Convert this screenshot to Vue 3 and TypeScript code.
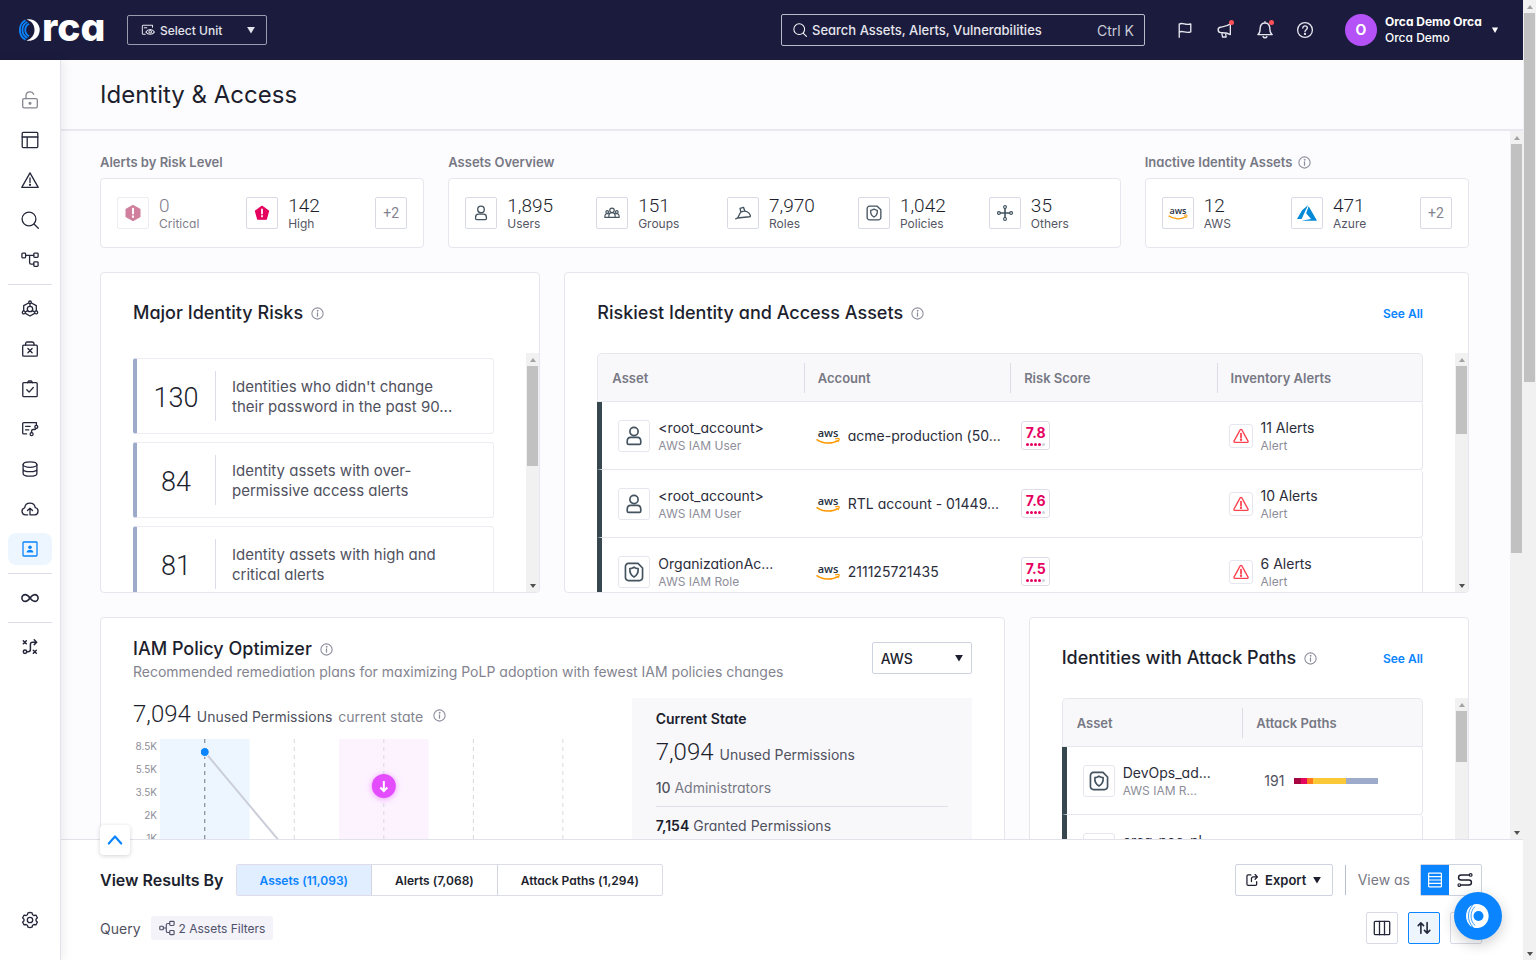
<script setup lang="ts">
import { h, ref, type FunctionalComponent } from 'vue'

const glyphs: Record<string, string> = {
  lock: '<rect x="1.7" y="7.6" width="14.6" height="9.2" rx="1.4"/><path d="M5 7.6V4.8a4 4 0 0 1 7.7-1.5"/><circle cx="9" cy="12.2" r=".9" fill="currentColor"/>',
  layout: '<rect x="1.2" y="1.4" width="15.6" height="15.2" rx="1"/><path d="M1.2 6h15.6M6.2 6v10.6"/>',
  warning: '<path d="M9 1.9 17.2 16.4H.8Z"/><path d="M9 7v4.6"/><circle cx="9" cy="13.8" r=".5" fill="currentColor"/>',
  search: '<circle cx="8" cy="8" r="6.9"/><path d="m13 13 4.3 4.2"/>',
  tree: '<rect x=".9" y="2.2" width="3.7" height="4.6" rx=".8"/><rect x="12.8" y="2.2" width="4.3" height="4.2" rx=".8"/><rect x="12.8" y="10.8" width="4.3" height="4.6" rx=".8"/><path d="M4.6 4.3h8.2M8.6 4.3v7.4a1.4 1.4 0 0 0 1.4 1.4h2.8"/>',
  cluster: '<path d="M9 2.2 15.3 5.6v6.8L9 16 2.7 12.4V5.6Z"/><circle cx="9" cy="9" r="2.7"/><path d="M9 3v3.3M6.7 10.6 3.5 12.5M11.3 10.6l3.2 1.9"/><circle cx="9" cy="2.3" r="1.3" fill="#fff"/><circle cx="2.8" cy="12.4" r="1.5" fill="#fff"/><circle cx="15.2" cy="12.4" r="1.5" fill="#fff"/>',
  caseX: '<rect x="1.7" y="5.2" width="14.6" height="11" rx="1"/><path d="M4.7 5.2V3.3A1.3 1.3 0 0 1 6 2h5a2 2 0 0 1 2 2v1.2M6.9 8.5l4.2 4.2M11.1 8.500l-4.200 4.200"/>',
  clipboard: '<rect x="1.8" y="2.7" width="14.4" height="14" rx="1"/><path d="M6.5 2.7 7.500 1h3l1 1.700M5.800 9.800l2.300 2.300 4.200-4.600"/>',
  route: '<path d="M5.6 13.900H2.700a1 1 0 0 1-1-1V3.600a1 1 0 0 1 1-1h12.700v2.800M4.600 6.300h4.600M4.600 9.800h3.200M10.600 12.500V11a1.500 1.500 0 0 1 1.500-1.500h1.400a1.500 1.500 0 0 0 1.500-1.300"/><circle cx="15.300" cy="6.900" r="1.500"/><circle cx="10.600" cy="14.200" r="1.500"/>',
  database: '<ellipse cx="9" cy="4.600" rx="6.900" ry="2.700"/><path d="M2.100 4.600v8.900c0 1.500 3.100 2.700 6.900 2.700s6.900-1.200 6.900-2.700V4.600M2.100 9c0 1.500 3.100 2.700 6.900 2.700s6.900-1.200 6.900-2.700"/>',
  cloud: '<path d="M6.700 14.800H4.400a3.500 3.500 0 0 1-.7-6.900 5.300 5.300 0 0 1 10.500-.2 3.600 3.600 0 0 1-.3 7.100H9V8.300M6.500 10.500 9 8.100l2.500 2.400"/>',
  badge: '<rect x="2" y="2" width="14" height="14" rx=".8"/><circle cx="9" cy="7.200" r="1.800" fill="currentColor" stroke="none"/><path d="M5.600 12.600c0-3.700 6.800-3.700 6.800 0Z" fill="currentColor" stroke="none"/>',
  infinity: '<path d="M9 9C7.200 6.500 6 5.600 4.300 5.600a3.400 3.400 0 0 0 0 6.800C6 12.400 7.200 11.500 9 9s3-3.400 4.700-3.400a3.400 3.400 0 0 1 0 6.800C12 12.400 10.800 11.500 9 9Z" stroke-width="1.600"/>',
  shuffle: '<g stroke-width="1.500"><path d="m2.300 2.700 3 3M5.300 2.700l-3 3M12.300 12.200l3 3M15.300 12.200l-3 3M6.200 13.700h1a2.200 2.200 0 0 0 2.200-2.200V6.400a2.200 2.200 0 0 1 2.200-2.200h3.800M13.200 1.800l2.500 2.400-2.500 2.400"/><circle cx="4" cy="13.700" r="1.700"/></g>',
  gear: '<path d="m9 1.300 2 .5.6 1.900 1.300.8 2-.4 1.500 2.600-1.400 1.500v1.600l1.400 1.500-1.500 2.600-2-.4-1.300.8-.6 1.900-2 .5-2-.5-.6-1.900-1.300-.8-2 .4-1.500-2.600L3 9.800V8.200L1.600 6.700l1.500-2.600 2 .4 1.300-.8L7 1.800Z"/><circle cx="9" cy="9" r="2.700"/>',
  unit: '<path d="M5.500 14.400H2.700a1 1 0 0 1-1-1V4a1 1 0 0 1 1-1h12.100v2.500M4.200 6.200h3.200M6.300 11.700c2.500-4.400 8.400-4.400 10.900 0-2.500 3.800-8.400 3.800-10.900 0Z"/><circle cx="11.800" cy="11.300" r="1.700"/>',
  flag: '<path d="M2.500 17.200V2.300c4.200-2.300 7 2 13-.2v9c-6 2.200-8.800-2-13 .2" stroke-width="1.500"/>',
  megaphone: '<path d="M15 1.900v12.300c-4-2.500-8-1.900-10.800-2.200-3.700-.6-3.900-5.100-.6-6.100C8.400 5 11.500 5 15 1.900ZM5.300 12.200l1 4.700h4l-.7-4.500" stroke-width="1.500"/>',
  bell: '<path d="M1.900 13.600c2.400-1.500 2-3.500 2.300-6.700C4.500 3.700 6.300 2 9 2s4.500 1.700 4.800 4.900c.3 3.200-.1 5.200 2.300 6.700ZM7.100 15.600c.7 1.500 3.100 1.500 3.800 0M9 2V.8" stroke-width="1.400"/>',
  help: '<circle cx="9" cy="9" r="7.400" stroke-width="1.300"/><path d="M6.800 7.100c0-3 4.500-2.800 4.500-.1 0 1.700-2.300 1.700-2.300 3.500" stroke-width="1.400"/><circle cx="9" cy="12.900" r=".5" fill="currentColor"/>',
  user: '<g stroke-width="1.500"><circle cx="9" cy="5" r="3.700"/><path d="M2.900 13.900c0-2.100 1.100-3.600 3.100-3.600h6c2 0 3.100 1.500 3.100 3.600v1.300a1.300 1.300 0 0 1-1.300 1.300H4.200a1.300 1.300 0 0 1-1.300-1.300Z"/></g>',
  group: '<circle cx="9" cy="6" r="2.500"/><path d="M5.500 14v-2.200c0-4.200 7-4.200 7 0V14ZM5.500 14H1v-1.700c0-2.300 2-3 4.200-2.400M12.500 14H17v-1.700c0-2.300-2-3-4.200-2.400"/><circle cx="3.600" cy="7.900" r="1.500"/><circle cx="14.400" cy="7.900" r="1.500"/>',
  role: '<path d="M.8 15.500 2.700 14.600c1.700-.9 1.500-4.900 4.300-6.700 4.500-2.600 9.600.4 10.300 4.100.1.800-.3 1.100-1 1.200L2.700 14.600M6.500 7.900 5.700 3.800l3.800-1.200 1.600 4.200" stroke-width="1.500"/>',
  policy: '<g stroke-width="1.500"><path d="M4 1.300h8.600l4.100 4.100V14a2.700 2.700 0 0 1-2.700 2.700H4A2.700 2.700 0 0 1 1.300 14V4A2.700 2.700 0 0 1 4 1.300Z"/><path d="M9 4.600c1.200.9 2.400 1.300 3.700 1.400.3 3.400-.6 5.900-3.700 7.500-3.100-1.600-4-4.100-3.700-7.500C6.600 5.900 7.800 5.500 9 4.600Z"/></g>',
  nodes: '<circle cx="9" cy="2.300" r="1.600"/><circle cx="9" cy="15.700" r="1.600"/><circle cx="2.200" cy="9" r="1.600"/><circle cx="15.800" cy="9" r="1.600"/><path d="M9 3.900v10.200M3.800 9h10.400" stroke-width="1.800"/>',
  info: '<circle cx="9" cy="9" r="7.800" stroke-width="1.500"/><path d="M9 8v4.800" stroke-width="1.700"/><circle cx="9" cy="5.300" r=".6" fill="currentColor"/>',
  critical: '<path d="M9 .8 16.500 4.900v8.200L9 17.200 1.500 13.100V4.900Z" fill="currentColor" stroke="none"/><path d="M9 4.800v4.700M9 12.300v.6" stroke="#fff" stroke-width="2"/>',
  high: '<path d="M9 1.500 16.300 6.800 13.800 15.900H4.200L1.700 6.800Z" fill="currentColor" stroke="currentColor" stroke-width="1.500"/><path d="M9 5v4.600M9 12.200v.6" stroke="#fff" stroke-width="2"/>',
  alert: '<path d="M8.200 1.900a1 1 0 0 1 1.600 0l7.100 12.800a1 1 0 0 1-.9 1.500H2a1 1 0 0 1-.9-1.500Z" stroke-width="1.500"/><path d="M9 6.300v4.500" stroke-width="2"/><circle cx="9" cy="13.200" r=".7" fill="currentColor"/>',
  azure: '<path d="M5.483 21.300H24L14.025 4.013l-3.038 8.347 5.836 6.938ZM13.230 2.700 6.105 8.677 0 19.253h5.505Z" transform="scale(.75)" fill="#0089d6" stroke="none"/>',
  share: '<path d="M7.500 2.500H4A1.500 1.500 0 0 0 2.500 4v10.500A1.500 1.500 0 0 0 4 16h9.500a1.500 1.500 0 0 0 1.500-1.500V11M8.300 11V7.500a2.500 2.500 0 0 1 2.500-2.500h5M13 2l3 3-3 3" stroke-width="1.600"/>',
  rows: '<rect x="1.800" y="1.300" width="14.400" height="15.400" rx=".8"/><path d="M1.800 5.200h14.400M1.800 9h14.400M1.800 12.800h14.400"/>',
  path: '<circle cx="15.400" cy="3.300" r="1.500"/><circle cx="2.600" cy="14.700" r="1.500"/><path d="M13.900 3.300H4.600a2.850 2.850 0 0 0 0 5.700h8.800a2.850 2.850 0 0 1 0 5.700H4.100" stroke-width="1.600"/>',
  columns: '<rect x="1.300" y="2.300" width="15.400" height="13.400" rx="1"/><path d="M6.500 2.300v13.400M11.500 2.300v13.400"/>',
  sort: '<path d="M5.500 15V3.500M2.500 6.300l3-3 3 3M12.500 3v11.500M9.500 11.700l3 3 3-3" stroke-width="1.800"/>',
  filter: '<path d="M2 3h14l-5.500 6.500V16L7.500 14V9.500Z"/>',
  query: '<rect x=".9" y="7" width="4" height="4" rx=".8"/><rect x="12" y="1.600" width="5" height="4.600" rx="1"/><rect x="12" y="11.800" width="5" height="4.600" rx="1"/><path d="M4.900 9h3.300M12 3.900h-2a1.800 1.800 0 0 0-1.800 1.800v6.600a1.800 1.800 0 0 0 1.800 1.800h2"/>',
  chevronUp: '<path d="m2 13 7-8 7 8" stroke-width="2.400"/>',
  caret: '<path d="M2 3.500h14L9 15.500Z" fill="currentColor" stroke="none"/>',
}

const Icon: FunctionalComponent<{ name: string }> = (props) =>
  h('svg', {
    class: 'icon',
    viewBox: '0 0 18 18',
    fill: 'none',
    stroke: 'currentColor',
    'stroke-width': '1.3',
    'stroke-linejoin': 'round',
    'stroke-linecap': 'round',
    'aria-hidden': 'true',
    innerHTML: glyphs[props.name],
  })
Icon.props = ['name']

const AwsMark: FunctionalComponent = () =>
  h('svg', {
    class: 'aws-mark',
    viewBox: '0 0 24 22',
    'aria-label': 'AWS',
    innerHTML:
      '<text x="12" y="12" text-anchor="middle" font-family="Open Sans, sans-serif" font-weight="600" font-size="11" fill="#252f3e">aws</text>' +
      '<path d="M.5 14.400c6 4.600 16 4.800 21.500 1" fill="none" stroke="#f90" stroke-width="1.500"/><path d="M19.200 13.800c2-.5 3.500-.5 3.800-.1s-.1 2-1.200 3.300" fill="none" stroke="#f90" stroke-width="1.200"/>',
  })

const ScrollBar: FunctionalComponent<{ size: string }> = (props) =>
  h('div', { class: 'sbar', 'aria-hidden': 'true' }, [
    h('i', { class: 'sbar-up' }),
    h('div', { class: 'sbar-track' }, [h('div', { class: 'sbar-thumb', style: { height: props.size } })]),
    h('i', { class: 'sbar-down' }),
  ])
ScrollBar.props = ['size']

const navGroups: string[][] = [
  ['lock', 'layout', 'warning', 'search', 'tree'],
  ['cluster', 'caseX', 'clipboard', 'route', 'database', 'cloud', 'badge'],
  ['infinity'],
  ['shuffle'],
]
const activeNav = ref('badge')

const overview = [
  { icon: 'user', value: '1,895', label: 'Users' },
  { icon: 'group', value: '151', label: 'Groups' },
  { icon: 'role', value: '7,970', label: 'Roles' },
  { icon: 'policy', value: '1,042', label: 'Policies' },
  { icon: 'nodes', value: '35', label: 'Others' },
]

const risks = [
  { count: 130, lines: ["Identities who didn't change", 'their password in the past 90...'] },
  { count: 84, lines: ['Identity assets with over-', 'permissive access alerts'] },
  { count: 81, lines: ['Identity assets with high and', 'critical alerts'] },
]

const riskiest = [
  { icon: 'user', name: '<root_account>', type: 'AWS IAM User', account: 'acme-production (50...', score: '7.8', alerts: 11 },
  { icon: 'user', name: '<root_account>', type: 'AWS IAM User', account: 'RTL account - 01449...', score: '7.6', alerts: 10 },
  { icon: 'policy', name: 'OrganizationAc...', type: 'AWS IAM Role', account: '211125721435', score: '7.5', alerts: 6 },
]

const attackRows = [
  { name: 'DevOps_ad...', type: 'AWS IAM R...', count: 191 },
  { name: 'orca-poc-pl...', type: 'AWS IAM R...', count: 164 },
]
const severity = [
  { color: '#a5063f', share: 7 },
  { color: '#e5065f', share: 6 },
  { color: '#ff7a1f', share: 6 },
  { color: '#fbc937', share: 33 },
  { color: '#9daaca', share: 32 },
]

const axis = ['8.5K', '5.5K', '3.5K', '2K', '1K']
const tabs = ['Assets (11,093)', 'Alerts (7,068)', 'Attack Paths (1,294)']
const activeTab = ref(0)
</script>

<template>
  <div class="page">
    <div class="shell">
      <header class="topbar">
        <a class="logo" href="#" aria-label="orca">
          <svg class="logo-ring" viewBox="0 0 22 22" fill="none">
            <path d="M7.500.600A10.700 10.700 0 1 1 7.500 21.400C12.500 20 15.500 16 15.500 11S12.500 2 7.500.600Z" fill="#fff" />
            <g stroke="#0a84ff" stroke-width="1.800">
              <path d="M6.500 1.300C-1 5.500-1 16.500 6.500 20.700" />
              <path d="M8.300 3C1.800 6.500 1.800 15.500 8.300 19" />
              <path d="M10 4.700C5 7.500 5 14.500 10 17.300" />
            </g>
          </svg>
          <span class="logo-text">rca</span>
        </a>
        <label class="unit">
          <Icon name="unit" class="s14" />
          <select aria-label="Unit"><option>Select Unit</option></select>
          <Icon name="caret" class="s10" />
        </label>
        <label class="search">
          <Icon name="search" class="s14" />
          <input type="text" placeholder="Search Assets, Alerts, Vulnerabilities" aria-label="Search" />
          <span class="hint">Ctrl K</span>
        </label>
        <div class="actions">
          <button aria-label="Flag"><Icon name="flag" class="s16" /></button>
          <button aria-label="News"><Icon name="megaphone" class="s16" /><i class="dot"></i></button>
          <button aria-label="Notifications"><Icon name="bell" class="s18" /><i class="dot"></i></button>
          <button aria-label="Help"><Icon name="help" class="s18" /></button>
        </div>
        <button class="profile">
          <span class="avatar">O</span>
          <span class="who"><b>Orca Demo Orca</b><span>Orca Demo</span></span>
          <Icon name="caret" class="s8" />
        </button>
      </header>

      <div class="body">
        <nav class="side" aria-label="Main">
          <template v-for="(group, g) in navGroups" :key="g">
            <hr v-if="g > 0" />
            <a
              v-for="n in group"
              :key="n"
              href="#"
              :aria-label="n"
              :class="{ active: n === activeNav, muted: n === 'lock' }"
              @click.prevent="activeNav = n"
            ><Icon :name="n" class="s18" /></a>
          </template>
          <a href="#" class="settings" aria-label="Settings"><Icon name="gear" class="s18" /></a>
        </nav>

        <main class="main">
          <div class="title"><h1>Identity &amp; Access</h1></div>

          <div class="viewport">
            <div class="dash">
              <section class="block w3">
                <h2 class="label">Alerts by Risk Level</h2>
                <div class="card stats short">
                  <div class="stat faded">
                    <span class="box critical"><Icon name="critical" class="s18" /></span>
                    <div><b>0</b><span>Critical</span></div>
                  </div>
                  <div class="stat">
                    <span class="box high"><Icon name="high" class="s16" /></span>
                    <div><b>142</b><span>High</span></div>
                  </div>
                  <button class="box more">+2</button>
                </div>
              </section>

              <section class="block w6">
                <h2 class="label">Assets Overview</h2>
                <div class="card stats long">
                  <div v-for="o in overview" :key="o.label" class="stat">
                    <span class="box"><Icon :name="o.icon" class="s16" /></span>
                    <div><b>{{ o.value }}</b><span>{{ o.label }}</span></div>
                  </div>
                </div>
              </section>

              <section class="block w3">
                <h2 class="label">Inactive Identity Assets <Icon name="info" class="s12" /></h2>
                <div class="card stats short">
                  <div class="stat">
                    <span class="box"><AwsMark class="small" /></span>
                    <div><b>12</b><span>AWS</span></div>
                  </div>
                  <div class="stat">
                    <span class="box"><Icon name="azure" class="s20" /></span>
                    <div><b>471</b><span>Azure</span></div>
                  </div>
                  <button class="box more">+2</button>
                </div>
              </section>

              <section class="card panel w4">
                <div class="panel-head"><h2>Major Identity Risks <Icon name="info" class="s12" /></h2></div>
                <div class="panel-body">
                  <ul class="risks">
                    <li v-for="r in risks" :key="r.count">
                      <span class="count">{{ r.count }}</span>
                      <p>{{ r.lines[0] }}<br />{{ r.lines[1] }}</p>
                    </li>
                  </ul>
                  <ScrollBar size="47%" />
                </div>
              </section>

              <section class="card panel w8">
                <div class="panel-head">
                  <h2>Riskiest Identity and Access Assets <Icon name="info" class="s12" /></h2>
                  <a href="#">See All</a>
                </div>
                <div class="panel-body">
                  <table class="grid">
                    <thead>
                      <tr><th>Asset</th><th>Account</th><th>Risk Score</th><th>Inventory Alerts</th></tr>
                    </thead>
                    <tbody>
                      <tr v-for="(r, i) in riskiest" :key="i">
                        <td>
                          <div class="cell asset">
                            <span class="box"><Icon :name="r.icon" class="s20" /></span>
                            <div class="pair"><span>{{ r.name }}</span><small>{{ r.type }}</small></div>
                          </div>
                        </td>
                        <td><div class="cell account"><AwsMark />{{ r.account }}</div></td>
                        <td>
                          <div class="cell risk">
                            <span class="score">{{ r.score }}<span class="dots"><i v-for="d in 5" :key="d"></i></span></span>
                          </div>
                        </td>
                        <td>
                          <div class="cell alerts">
                            <span class="box red"><Icon name="alert" class="s16" /></span>
                            <div class="pair"><span>{{ r.alerts }} Alerts</span><small>Alert</small></div>
                          </div>
                        </td>
                      </tr>
                    </tbody>
                  </table>
                  <ScrollBar size="32%" />
                </div>
              </section>

              <section class="card panel w8 optimizer">
                <div class="opt-head">
                  <div>
                    <h2>IAM Policy Optimizer <Icon name="info" class="s12" /></h2>
                    <p>Recommended remediation plans for maximizing PoLP adoption with fewest IAM policies changes</p>
                  </div>
                  <label class="provider">
                    <select aria-label="Provider"><option>AWS</option></select>
                    <Icon name="caret" class="s10" />
                  </label>
                </div>
                <div class="opt-body">
                  <div>
                    <div class="headline">
                      <b>7,094</b><span>Unused Permissions</span><em>current state</em><Icon name="info" class="s12" />
                    </div>
                    <div class="chart">
                      <div class="axis"><span v-for="a in axis" :key="a">{{ a }}</span></div>
                      <svg class="plot">
                        <rect x="0" y="0" width="20%" height="100%" fill="#edf5ff" />
                        <rect x="40%" y="0" width="20%" height="100%" fill="#fdf3ff" />
                        <g stroke="#d9d9df" stroke-dasharray="4 4">
                          <line x1="30%" x2="30%" y1="0" y2="100%" />
                          <line x1="50%" x2="50%" y1="0" y2="100%" />
                          <line x1="70%" x2="70%" y1="0" y2="100%" />
                          <line x1="90%" x2="90%" y1="0" y2="100%" />
                        </g>
                        <line x1="10%" x2="10%" y1="0" y2="100%" stroke="#6d7682" stroke-dasharray="4 4" />
                        <line x1="10%" y1="13" x2="30%" y2="120" stroke="#cbced9" stroke-width="2" />
                        <circle cx="10%" cy="13" r="4.500" fill="#0a84ff" stroke="#fff" />
                        <svg x="50%" y="47" overflow="visible">
                          <circle class="glow" r="12" fill="#e44dff" />
                          <path d="M0-5V5M-3.500 1.500 0 5l3.500-3.500" fill="none" stroke="#fff" stroke-width="2" />
                        </svg>
                      </svg>
                    </div>
                  </div>
                  <aside class="state">
                    <h3>Current State</h3>
                    <div class="headline"><b>7,094</b><span>Unused Permissions</span></div>
                    <p class="admins"><b>10</b> Administrators</p>
                    <p class="granted"><b>7,154</b> Granted Permissions</p>
                  </aside>
                </div>
              </section>

              <section class="card panel w4">
                <div class="panel-head">
                  <h2>Identities with Attack Paths <Icon name="info" class="s12" /></h2>
                  <a href="#">See All</a>
                </div>
                <div class="panel-body">
                  <table class="grid">
                    <thead><tr><th>Asset</th><th>Attack Paths</th></tr></thead>
                    <tbody>
                      <tr v-for="r in attackRows" :key="r.name">
                        <td>
                          <div class="cell asset">
                            <span class="box"><Icon name="policy" class="s20" /></span>
                            <div class="pair"><span>{{ r.name }}</span><small>{{ r.type }}</small></div>
                          </div>
                        </td>
                        <td>
                          <div class="cell paths">
                            {{ r.count }}
                            <span class="bar"><i v-for="s in severity" :key="s.color" :style="{ background: s.color, flexGrow: s.share }"></i></span>
                          </div>
                        </td>
                      </tr>
                    </tbody>
                  </table>
                  <ScrollBar size="24%" />
                </div>
              </section>
            </div>
            <ScrollBar size="60%" />
          </div>

          <section class="results">
            <button class="collapse" aria-label="Expand results"><Icon name="chevronUp" class="s16" /></button>
            <div class="row">
              <h2>View Results By</h2>
              <div class="tabs">
                <button v-for="(t, i) in tabs" :key="t" :class="{ on: i === activeTab }" @click="activeTab = i">{{ t }}</button>
              </div>
              <button class="export"><Icon name="share" class="s14" />Export<Icon name="caret" class="s10" /></button>
              <span class="viewas">View as</span>
              <div class="segment">
                <button class="on" aria-label="Table view"><Icon name="rows" class="s16" /></button>
                <button aria-label="Path view"><Icon name="path" class="s16" /></button>
              </div>
            </div>
            <div class="row second">
              <span class="query">Query</span>
              <button class="chip"><Icon name="query" class="s16" />2 Assets Filters</button>
              <div class="tools">
                <button class="box" aria-label="Columns"><Icon name="columns" class="s18" /></button>
                <button class="box sel" aria-label="Sort"><Icon name="sort" class="s16" /></button>
                <button class="box" aria-label="Filter"><Icon name="filter" class="s16" /></button>
              </div>
            </div>
            <button class="fab" aria-label="Orca assistant">
              <svg viewBox="0 0 28 28" fill="none">
                <path d="M10 2.300A12 12 0 1 1 10 25.700C.5 20 .5 8 10 2.300Z" fill="#fff" />
                <circle cx="14.500" cy="14" r="5" fill="#0a84ff" />
                <path d="M7.500 3.800c-6.500 5.500-6.500 15 0 20.400" stroke="#fff" stroke-width="1.200" />
                <g stroke="#0a84ff" stroke-width=".8">
                  <path d="M8.600 3.500c-5.500 5.500-5.500 15.500 0 21M11 4.500c-5.300 5-5.300 14 0 19" />
                </g>
              </svg>
            </button>
          </section>
        </main>
      </div>
    </div>
    <ScrollBar size="39.5%" />
  </div>
</template>

<style>
body {
  margin: 0;
}
.sbar {
  flex: none;
  width: 13px;
  display: flex;
  flex-direction: column;
  background: #f1f1f1;
}
.sbar-track {
  flex: 1;
  padding: 0 1px;
}
.sbar-thumb {
  background: #c1c1c1;
}
.sbar-up,
.sbar-down {
  flex: none;
  height: 13px;
  display: flex;
  align-items: center;
  justify-content: center;
}
.sbar-up::before,
.sbar-down::before {
  content: '';
  border: 3px solid transparent;
  border-top-width: 0;
  border-bottom: 4px solid #a3a3a3;
}
.sbar-down::before {
  border-bottom: 0;
  border-top: 4px solid #505050;
}
</style>

<style scoped>
.page {
  display: flex;
  height: 100vh;
  overflow: hidden;
  font-family: Inter, 'Open Sans', sans-serif;
  font-feature-settings: 'cv11', 'calt' 0;
  font-size: 14px;
  color: #1d1f2e;
  background: #fcfcfe;
}
button,
input,
select {
  font: inherit;
  font-feature-settings: inherit;
  color: inherit;
  background: none;
  border: 0;
  padding: 0;
  margin: 0;
  outline: none;
  appearance: none;
}
button {
  cursor: pointer;
}
a {
  text-decoration: none;
  color: #0a84ff;
}
h1,
h2,
h3,
p,
ul {
  margin: 0;
  padding: 0;
  list-style: none;
}
h2 {
  font-size: 18px;
  font-weight: 500;
  line-height: 24px;
}
.icon {
  flex: none;
  display: block;
}
.s8 { width: 8px; height: 8px; }
.s10 { width: 10px; height: 10px; }
.s12 { width: 13px; height: 13px; }
.s14 { width: 14px; height: 14px; }
.s16 { width: 16px; height: 16px; }
.s18 { width: 18px; height: 18px; }
.s20 { width: 20px; height: 20px; }
h2 .icon,
.headline .icon {
  color: #8d8e9c;
}

.shell {
  flex: 1;
  min-width: 0;
  display: flex;
  flex-direction: column;
}
.topbar {
  flex: none;
  height: 60px;
  display: flex;
  align-items: center;
  padding: 0 24px 0 19px;
  background: #1b1c3d;
  color: #fff;
}
.logo {
  display: flex;
  align-items: center;
  width: 108px;
  color: #fff;
}
.logo-ring {
  width: 22px;
  height: 22px;
}
.logo-text {
  margin: -6px 0 0 1px;
  font-size: 39px;
  line-height: 42px;
  font-weight: 800;
}
.unit {
  box-sizing: border-box;
  display: flex;
  align-items: center;
  gap: 5px;
  width: 140px;
  height: 30px;
  padding: 0 10px 0 13px;
  border: 1px solid #9a9bae;
  border-radius: 2px;
  color: #e4e4ec;
}
.unit select {
  flex: 1;
  min-width: 0;
  font-size: 12px;
  font-weight: 500;
}
.search {
  box-sizing: border-box;
  display: flex;
  align-items: center;
  gap: 5px;
  width: 364px;
  height: 32px;
  margin-left: auto;
  padding: 0 10px 0 11px;
  border: 1px solid #b9bac8;
  border-radius: 2px;
}
.search input {
  flex: 1;
  min-width: 0;
  font-weight: 500;
  font-size: 13px;
}
.search input::placeholder {
  color: #e6e6ee;
  opacity: 1;
}
.hint {
  color: #c9cad6;
}
.actions {
  display: flex;
  gap: 8px;
  margin: 0 24px;
  color: #e6e6ee;
}
.actions button {
  position: relative;
  width: 32px;
  height: 32px;
  display: grid;
  place-items: center;
}
.dot {
  position: absolute;
  top: 6px;
  right: 7px;
  width: 5px;
  height: 5px;
  border-radius: 50%;
  background: #ff5258;
}
.profile {
  display: flex;
  align-items: center;
  gap: 8px;
  text-align: left;
}
.avatar {
  width: 32px;
  height: 32px;
  border-radius: 50%;
  background: #b452f8;
  text-align: center;
  line-height: 32px;
  font-weight: 700;
}
.who {
  display: flex;
  flex-direction: column;
  width: 98px;
  font-size: 12px;
  line-height: 16px;
  font-weight: 500;
  white-space: nowrap;
}
.who b {
  font-weight: 700;
}

.body {
  flex: 1;
  min-height: 0;
  display: flex;
}
.side {
  flex: none;
  z-index: 1;
  display: flex;
  flex-direction: column;
  gap: 8px;
  width: 44px;
  padding: 24px 8px;
  background: #fff;
  border-right: 1px solid #e2e2ec;
  box-shadow: 2px 0 10px #1b1c3d14;
}
.side a {
  height: 32px;
  display: grid;
  place-items: center;
  border-radius: 8px;
  color: #24263a;
}
.side a.muted {
  color: #85868f;
}
.side a.active {
  background: #edf6ff;
  color: #0a84ff;
}
.side hr {
  width: 100%;
  height: 1px;
  margin: 0;
  border: 0;
  background: #dcdde8;
}
.side .settings {
  margin-top: auto;
}

.main {
  flex: 1;
  min-width: 0;
  display: flex;
  flex-direction: column;
}
.title {
  padding: 17px 39px 16px;
  border-bottom: 2px solid #e9e9f1;
}
.title h1 {
  font-size: 24px;
  line-height: 36px;
  font-weight: 400;
}
.viewport {
  flex: 1;
  min-height: 0;
  display: flex;
}
.dash {
  flex: 1;
  min-width: 0;
  overflow: hidden;
  display: grid;
  grid-template-columns: repeat(12, minmax(0, 1fr));
  align-content: start;
  gap: 24px;
  padding: 23px 41px 24px 39px;
}
.w3 { grid-column: span 3; }
.w4 { grid-column: span 4; }
.w6 { grid-column: span 6; }
.w8 { grid-column: span 8; }
.label {
  display: flex;
  align-items: center;
  gap: 6px;
  margin-bottom: 8px;
  font-size: 13px;
  font-weight: 600;
  line-height: 16px;
  color: #777884;
}
.card {
  box-sizing: border-box;
  background: #fff;
  border: 1px solid #e6e6ee;
  border-radius: 4px;
}
.stats {
  display: grid;
  gap: 16px;
  align-items: center;
  height: 70px;
  padding: 0 16px;
}
.short { grid-template-columns: 1fr 1fr 32px; }
.long { grid-template-columns: repeat(5, 1fr); }
.box {
  box-sizing: border-box;
  flex: none;
  display: grid;
  place-items: center;
  width: 32px;
  height: 32px;
  border: 1px solid #d8dae6;
  border-radius: 2px;
  background: #fff;
  color: #43535f;
}
.stat {
  display: flex;
  align-items: center;
  gap: 10px;
}
.stat div {
  padding-top: 2px;
}
.stat b {
  display: block;
  font: 300 19px/20px Roboto, sans-serif;
}
.stat div span {
  display: block;
  font-size: 12px;
  line-height: 16px;
  color: #555663;
}
.faded .box { border-color: #ececf2; }
.faded b,
.faded div span { color: #7f808c; }
.box.critical { color: #d07f9c; }
.box.high { color: #e5005f; }
.more {
  font: 400 14px/20px Roboto, sans-serif;
  color: #83848f;
}
.aws-mark {
  flex: none;
  overflow: visible;
  width: 24px;
  height: 22px;
}
.aws-mark.small {
  width: 20px;
  height: 18px;
}

.panel {
  height: 321px;
  display: flex;
  flex-direction: column;
  overflow: hidden;
}
.panel-head {
  flex: none;
  display: flex;
  justify-content: space-between;
  align-items: center;
  height: 80px;
  padding: 0 45px 0 32px;
  box-sizing: border-box;
}
.panel-head h2,
.opt-head h2 {
  display: flex;
  align-items: center;
  gap: 8px;
  white-space: nowrap;
}
.panel-head a {
  font-size: 12px;
  font-weight: 600;
}
.panel-body {
  flex: 1;
  min-height: 0;
  display: flex;
  gap: 32px;
  padding-left: 32px;
}
.risks {
  flex: 1;
  min-width: 0;
  padding-top: 5px;
  display: flex;
  flex-direction: column;
  gap: 8px;
}
.risks li {
  flex: none;
  box-sizing: border-box;
  display: flex;
  align-items: center;
  height: 76px;
  border: 1px solid #ececf2;
  border-left: 4px solid #9daaca;
  border-radius: 3px;
}
.count {
  flex: none;
  width: 78px;
  height: 50px;
  line-height: 54px;
  border-right: 1px solid #dcdde8;
  text-align: center;
  font-family: Roboto, sans-serif;
  font-weight: 300;
  font-size: 27px;
}
.risks p {
  padding: 2px 0 0 16px;
  font-size: 15px;
  line-height: 20px;
  color: #50515e;
  white-space: nowrap;
}

.grid {
  flex: 1;
  min-width: 0;
  width: 100%;
  height: 0;
  table-layout: fixed;
  border-collapse: separate;
  border-spacing: 0;
}
.grid th {
  height: 49px;
  box-sizing: border-box;
  padding: 0 0 0 14px;
  background: linear-gradient(#dcdde8, #dcdde8) left center / 1px 30px no-repeat #f8f8fb;
  border: 0 solid #e6e6ee;
  border-width: 1px 0;
  text-align: left;
  font-size: 13px;
  font-weight: 600;
  line-height: 30px;
  color: #777884;
}
.grid th:first-child {
  background-image: none;
  border-left-width: 1px;
  border-top-left-radius: 5px;
}
.grid th:last-child {
  border-right-width: 1px;
  border-top-right-radius: 5px;
}
.grid td {
  height: 68px;
  box-sizing: border-box;
  padding: 0;
  border-bottom: 1px solid #e6e6ee;
  background: #fff;
}
.grid td:first-child {
  border-left: 5px solid #36474f;
}
.grid td:last-child {
  border-right: 1px solid #e6e6ee;
  border-radius: 0 4px 4px 0;
}
.cell {
  display: flex;
  align-items: center;
  gap: 8px;
  font-size: 14px;
  color: #2b2d3b;
  white-space: nowrap;
}
.asset { padding-left: 16px; }
.account { padding-left: 12px; }
.risk { padding-left: 11px; }
.alerts { padding-left: 12px; }
.paths { padding-left: 22px; gap: 10px; color: #50515e; }
.cell .box { border-color: #e6e6ee; border-radius: 3px; }
.cell .red { width: 24px; height: 24px; color: #fb4452; }
.pair span {
  display: block;
  line-height: 20px;
}
.pair small {
  display: block;
  font-size: 12px;
  line-height: 16px;
  color: #8d8e99;
}
.score {
  box-sizing: border-box;
  width: 29px;
  height: 29px;
  border: 1px solid #dcdde8;
  border-radius: 3px;
  text-align: center;
  font-size: 14px;
  line-height: 21px;
  font-weight: 700;
  color: #e5005f;
}
.dots {
  display: flex;
  justify-content: center;
  gap: 1px;
}
.dots i {
  width: 3px;
  height: 3px;
  border-radius: 50%;
  background: currentColor;
}
.dots i:last-child { background: #cfd2df; }
.bar {
  display: flex;
  width: 84px;
  height: 6px;
}
.bar i { flex-basis: 0; }

.optimizer {
  padding: 19px 32px 0;
}
.opt-head {
  display: flex;
  justify-content: space-between;
  align-items: center;
}
.opt-head p {
  line-height: 22px;
  color: #83848f;
}
.provider {
  box-sizing: border-box;
  display: flex;
  align-items: center;
  width: 100px;
  height: 32px;
  margin-top: -4px;
  padding: 0 7px 0 8px;
  border: 1px solid #cfd2df;
  border-radius: 2px;
}
.provider select {
  flex: 1;
  font-weight: 500;
}
.opt-body {
  flex: 1;
  display: grid;
  grid-template-columns: 1fr 340px;
  gap: 24px;
  padding-top: 15px;
}
.headline {
  display: flex;
  align-items: baseline;
  gap: 6px;
  line-height: 32px;
  color: #50515e;
}
.headline b {
  font-family: Roboto, sans-serif;
  font-weight: 300;
  font-size: 24px;
  color: #1d1f2e;
}
.headline em {
  font-style: normal;
  color: #83848f;
}
.headline .icon {
  margin-left: 4px;
  align-self: center;
}
.chart {
  display: flex;
  gap: 3px;
  margin-top: 6px;
}
.axis {
  width: 24px;
  display: flex;
  flex-direction: column;
  gap: 9px;
  font-size: 10px;
  line-height: 14px;
  text-align: right;
  color: #8d8e99;
}
.plot {
  flex: 1;
  min-width: 0;
  height: 180px;
}
.glow {
  filter: drop-shadow(0 1px 3px #e44dff88);
}
.state {
  padding: 12px 24px;
  background: #f8f8fb;
}
.state h3 {
  font-size: 14px;
  font-weight: 600;
  line-height: 18px;
}
.state .headline { margin-top: 8px; }
.state b { color: #1d1f2e; }
.admins {
  margin-top: 7px;
  padding-bottom: 8px;
  line-height: 20px;
  color: #777884;
  border-bottom: 1px solid #dfe0ea;
}
.state .admins b {
  font-weight: 500;
  color: #50515e;
}
.granted {
  padding-top: 8px;
  line-height: 22px;
  color: #50515e;
}
.granted b {
  font-weight: 600;
}

.results {
  flex: none;
  position: relative;
  box-sizing: border-box;
  height: 121px;
  padding: 24px 41px 16px 39px;
  border-top: 1px solid #e2e2ea;
  background: #fff;
}
.collapse {
  position: absolute;
  top: -15px;
  left: 39px;
  width: 30px;
  height: 30px;
  display: grid;
  place-items: center;
  border-radius: 4px;
  background: #fff;
  box-shadow: 0 1px 4px #1b1c3d30;
  color: #0a84ff;
}
.row {
  display: flex;
  align-items: center;
  height: 32px;
}
.second { margin-top: 16px; }
.row h2 {
  font-size: 16px;
  font-weight: 600;
}
.tabs {
  display: flex;
  margin-left: 12px;
  border: 1px solid #dcdde8;
  border-radius: 2px;
}
.tabs button {
  height: 30px;
  padding: 0 23px;
  font-size: 12px;
  font-weight: 600;
}
.tabs button + button { border-left: 1px solid #d2d4e0; }
.tabs .on {
  background: #e1eeff;
  color: #0a84ff;
}
.export {
  box-sizing: border-box;
  display: flex;
  align-items: center;
  justify-content: center;
  gap: 6px;
  width: 98px;
  height: 32px;
  margin-left: auto;
  border: 1px solid #cfd2df;
  border-radius: 2px;
  font-size: 13px;
  font-weight: 600;
}
.viewas {
  margin-left: 12px;
  padding: 0 10px 0 12px;
  border-left: 1px solid #b9bdd0;
  line-height: 30px;
  color: #777884;
}
.segment {
  display: flex;
  border: 1px solid #cfd2df;
  border-radius: 2px;
}
.segment button {
  width: 32px;
  height: 30px;
  display: grid;
  place-items: center;
}
.segment .on {
  width: 28px;
  background: #0a84ff;
  color: #fff;
}
.query { color: #50515e; }
.chip {
  display: flex;
  align-items: center;
  gap: 4px;
  height: 24px;
  margin-left: 10px;
  padding: 0 8px;
  border-radius: 3px;
  background: #f3f3f9;
  font-size: 12px;
  color: #50516b;
}
.tools {
  display: flex;
  gap: 10px;
  margin-left: auto;
}
.tools .box { color: #24263a; }
.tools .sel {
  border-color: #0a84ff;
  background: #edf6ff;
}
.fab {
  position: absolute;
  right: 21px;
  bottom: 20px;
  width: 48px;
  height: 48px;
  display: grid;
  place-items: center;
  border-radius: 50%;
  background: #0a84ff;
  box-shadow: 0 4px 14px #0003;
}
.fab svg {
  width: 28px;
  height: 28px;
}
</style>
